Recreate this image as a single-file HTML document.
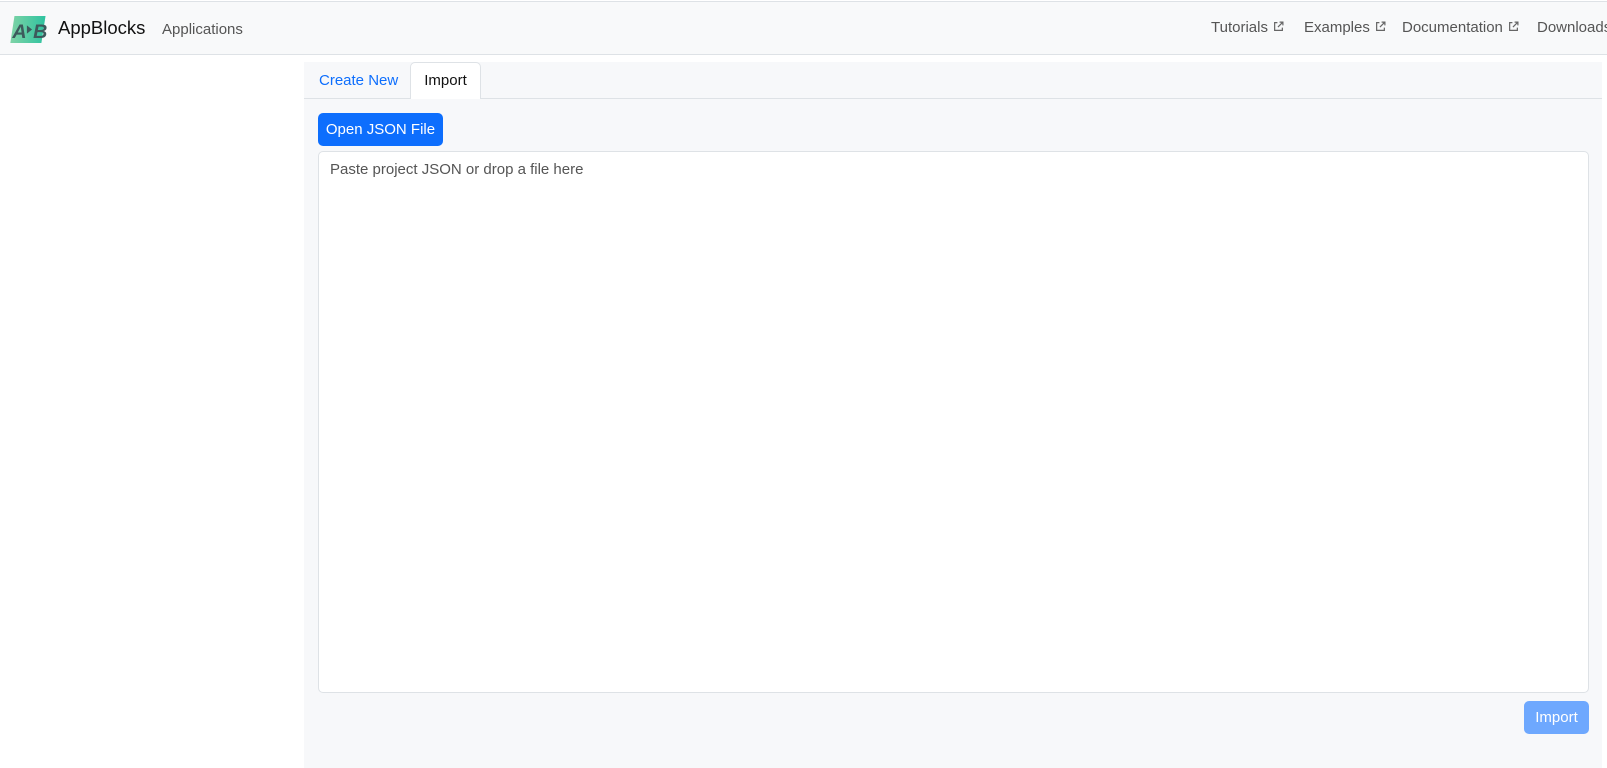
<!DOCTYPE html>
<html><head><style>
*{box-sizing:border-box;margin:0;padding:0}
body{width:1607px;height:768px;background:#fff;font-family:"Liberation Sans",sans-serif;position:relative;overflow:hidden;color:#212529}
.nav{position:absolute;left:0;top:1px;width:1607px;height:54px;background:#f8f9fa;border-top:1px solid #dee2e6;border-bottom:1px solid #dee2e6}
.a{position:absolute;font-size:15px;color:#555;top:17px;white-space:nowrap}
.ext{display:inline-block;width:11px;height:11px;vertical-align:0px;margin-left:5px}
.panel{position:absolute;left:304px;top:62px;width:1298px;height:706px;background:#f7f8fa}
.tabs{position:absolute;left:0;top:36px;width:1298px;border-top:1px solid #dee2e6}
</style></head><body>
<div class="nav">
<svg style="position:absolute;left:9px;top:13px" width="42" height="29" viewBox="0 0 40 28">
<defs><linearGradient id="g" x1="0" x2="1"><stop offset="0" stop-color="#7fd3a6"/><stop offset="1" stop-color="#2ec3a0"/></linearGradient></defs>
<path d="M5 1h30l-4 26H1z" fill="url(#g)"/>
<text x="3" y="22" font-family="Liberation Sans" font-style="italic" font-weight="bold" font-size="19" fill="#3d5a5c">A</text>
<path d="M17 10l5 4-5 4z" fill="#3d5a5c"/>
<text x="23" y="22" font-family="Liberation Sans" font-style="italic" font-weight="bold" font-size="19" fill="#3d5a5c">B</text>
</svg>
<div class="a" style="left:58px;top:15px;font-size:18.5px;color:#111">AppBlocks</div>
<div class="a" style="left:162px;top:19px">Applications</div>
<div class="a" style="left:1211px">Tutorials<svg class="ext" viewBox="0 0 10 10" fill="none" stroke="#666" stroke-width="1.1"><path d="M4 1.5H1.5v7h7V6M6 1h3v3M9 1L4.5 5.5"/></svg></div>
<div class="a" style="left:1304px">Examples<svg class="ext" viewBox="0 0 10 10" fill="none" stroke="#666" stroke-width="1.1"><path d="M4 1.5H1.5v7h7V6M6 1h3v3M9 1L4.5 5.5"/></svg></div>
<div class="a" style="left:1402px">Documentation<svg class="ext" viewBox="0 0 10 10" fill="none" stroke="#666" stroke-width="1.1"><path d="M4 1.5H1.5v7h7V6M6 1h3v3M9 1L4.5 5.5"/></svg></div>
<div class="a" style="left:1537px">Downloads</div>
</div>
<div class="panel">
<div class="tabs"></div>
<div style="position:absolute;left:15px;top:10px;font-size:15px;color:#0d6efd">Create New</div>
<div style="position:absolute;left:106px;top:0;width:71px;height:37px;background:#fff;border:1px solid #dee2e6;border-bottom:none;border-radius:5px 5px 0 0;font-size:15px;color:#111;text-align:center;line-height:36px">Import</div>
<div style="position:absolute;left:14px;top:51px;width:125px;height:33px;background:#0d6efd;border-radius:5px;color:#fff;font-size:15px;text-align:center;line-height:33px">Open JSON File</div>
<div style="position:absolute;left:14px;top:89px;width:1271px;height:542px;background:#fff;border:1px solid #dee2e6;border-radius:5px;font-size:15px;color:#555;padding:9px 11px">Paste project JSON or drop a file here</div>
<div style="position:absolute;left:1220px;top:639px;width:65px;height:33px;background:#6ea8fe;border-radius:5px;color:#fff;font-size:15px;text-align:center;line-height:33px">Import</div>
</div>
</body></html>
